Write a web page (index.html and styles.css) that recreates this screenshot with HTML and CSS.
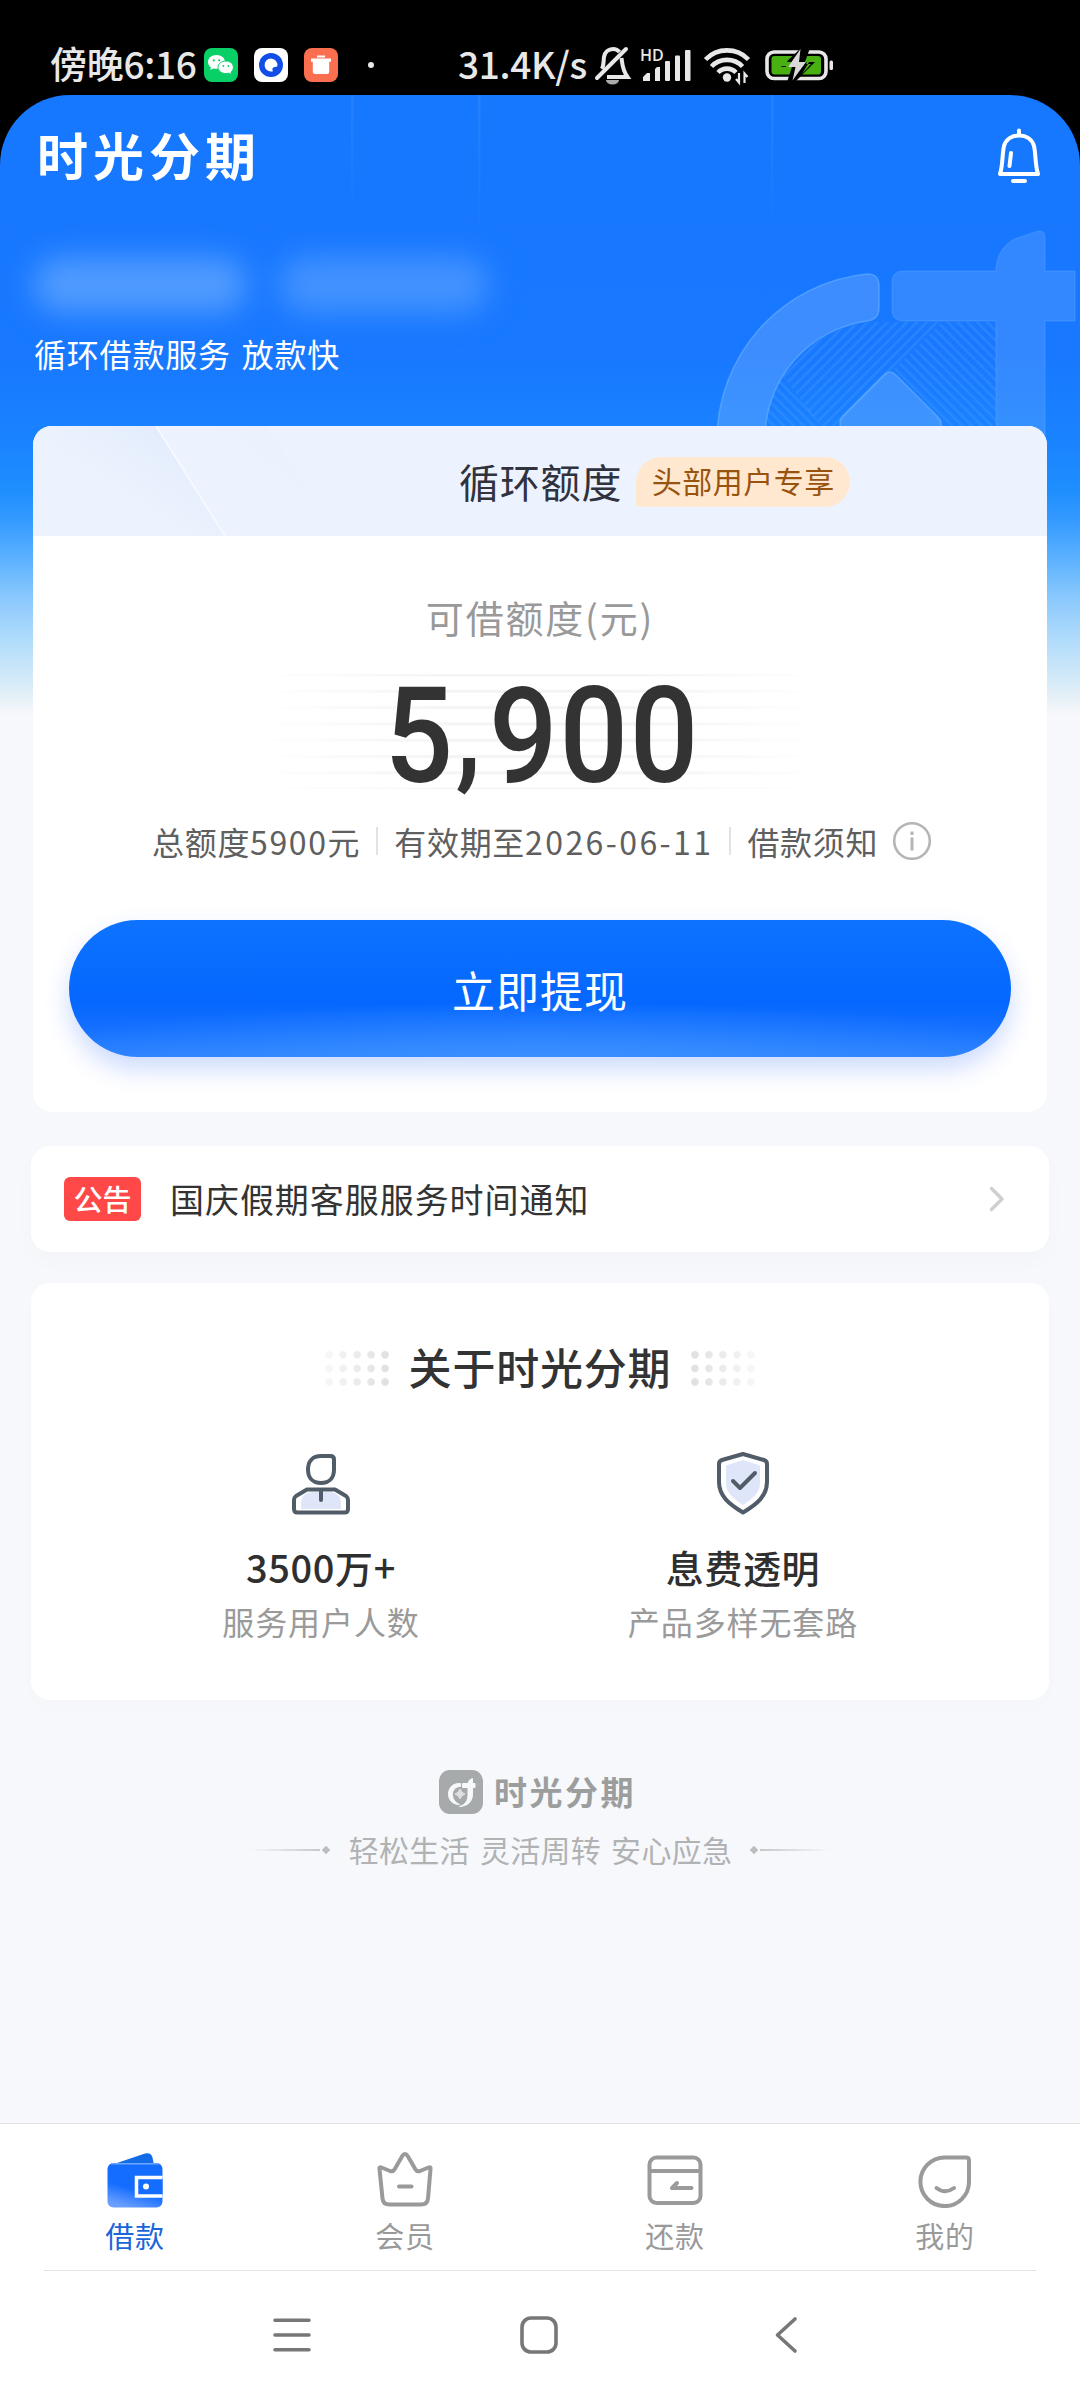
FILE: index.html
```html
<!DOCTYPE html>
<html lang="zh-CN">
<head>
<meta charset="utf-8">
<title>时光分期</title>
<link rel="stylesheet" href="styles.css">
</head>
<body>
<div class="phone">
  <header class="status">
    <span class="status-text">傍晚6:16</span>
    <svg class="app-badge first" width="34" height="34" viewBox="0 0 34 34">
      <rect width="34" height="34" rx="8" fill="#08cf66"/>
      <path d="M12.500 7C7.500 7 4 10 4 14c0 2.300 1.200 4.200 3 5.500L6.300 22l3.200-1.600c1 .3 2 .4 3 .4 5 0 8.500-3 8.500-6.900S17.500 7 12.500 7z" fill="#fff"/>
      <path d="M22 13c-4.600 0-8 2.700-8 6.300s3.400 6.300 8 6.300c1 0 1.900-.1 2.700-.4l2.900 1.500-.7-2.400c1.500-1.100 2.500-2.900 2.500-5C29.400 15.700 26.200 13 22 13z" fill="#fff" stroke="#08cf66" stroke-width="1"/>
      <g fill="#08cf66"><circle cx="9.800" cy="12.300" r="1.100"/><circle cx="15.200" cy="12.300" r="1.100"/><circle cx="19.400" cy="18" r=".9"/><circle cx="24.400" cy="18" r=".9"/></g>
    </svg>
    <svg class="app-badge" width="34" height="34" viewBox="0 0 34 34">
      <rect width="34" height="34" rx="8" fill="#fff"/>
      <circle cx="17" cy="17" r="12" fill="#124de8"/>
      <path d="M17 10.500a6.500 6.500 0 1 0 2 12.700c-1.200-2-.6-3.600 1-4 1.300-.3 2.500-.2 3.200-.6A6.500 6.500 0 0 0 17 10.500z" fill="#fff"/>
    </svg>
    <svg class="app-badge" width="34" height="34" viewBox="0 0 34 34">
      <rect width="34" height="34" rx="8" fill="#fa6f50"/>
      <path d="M13 7.500h8v2h-8zM7 10.500h20v3.200h-1.800V24a2 2 0 0 1-2 2H10.800a2 2 0 0 1-2-2V13.700H7z" fill="#fff"/>
    </svg>
    <i class="status-dot"></i>
    <span class="status-text speed">31.4K/s</span>
    <svg class="sys-icons" width="250" height="48" viewBox="590 40 250 48">
      <g fill="none" stroke="#e8e8e8" stroke-width="4">
        <path d="M597 77 626 48" stroke-linecap="round"/>
        <path d="M602 68c2-4 1.500-9 2-12 1-5 4.500-8 9-8 2.500 0 5 1 6.500 3"/>
        <path d="M621.500 57c1 6 .5 11 6 19H607"/>
      </g>
      <path d="M606 79h13a6.500 4.500 0 0 1-13 0z" fill="#aaa"/>
      <text x="640" y="60" class="hd">HD</text>
      <g fill="#e8e8e8">
        <path d="M643 80v-4l4-4h3v8z"/>
        <path d="M655 68l2-2h3v14h-5z"/>
        <rect x="665" y="60" width="5" height="20" rx="1"/>
        <rect x="675" y="54.500" width="5" height="25.500" rx="1"/>
        <rect x="685" y="49" width="5.500" height="31" rx="1"/>
        <circle cx="727" cy="76.500" r="4.200"/>
      </g>
      <g fill="none" stroke="#e8e8e8" stroke-width="4.600">
        <path d="M705.500 58.500a30 30 0 0 1 43 0"/>
        <path d="M711.500 65.500a21.500 21.500 0 0 1 31 0"/>
        <path d="M718 71.500a12.500 12.500 0 0 1 18 0"/>
        <path d="M739 72v9.500l-3-3.500M744.500 82v-9.500l3 3.500" stroke-width="2.200"/>
      </g>
      <rect x="767" y="51" width="59" height="26.500" rx="7" fill="none" stroke="#e8e8e8" stroke-width="3.600"/>
      <rect x="771.500" y="55" width="49.500" height="18.500" rx="3" fill="#48b010"/>
      <rect x="829.500" y="59.500" width="3.500" height="9.500" rx="1.500" fill="#e8e8e8"/>
      <path d="M801 47 781 66h11l-5 15h8l20-20h-10l5-14z" fill="#000"/>
      <path d="M786 56 780 65h6l-3 8 9-12h-5l2-5zM808 56l-3 5h4l-7 12 9-10h-5l3-7z" fill="#48b010"/>
      <path d="M800.500 48 788 66h7.500l-3 13.500L806 61h-7z" fill="#d9d9d9"/>
    </svg>
  </header>

  <main class="app">
    <svg class="backdrop" width="1080" height="400" viewBox="0 95 1080 400">
      <defs>
        <linearGradient id="beam" x1="0" y1="0" x2="0" y2="1"><stop offset="0" stop-color="#5aa3ff" stop-opacity=".22"/><stop offset="1" stop-color="#5aa3ff" stop-opacity="0"/></linearGradient>
        <pattern id="up" width="7" height="7" patternUnits="userSpaceOnUse" patternTransform="rotate(45)"><rect width="2.500" height="7" fill="#51a0ff" fill-opacity=".3"/></pattern>
        <pattern id="down" width="7" height="7" patternUnits="userSpaceOnUse" patternTransform="rotate(-45)"><rect width="2.500" height="7" fill="#51a0ff" fill-opacity=".3"/></pattern>
      </defs>
      <rect x="351" y="95" width="2.500" height="120" fill="url(#beam)"/>
      <rect x="478" y="95" width="2.500" height="150" fill="url(#beam)"/>
      <rect x="771" y="95" width="2.500" height="130" fill="url(#beam)"/>
      <path d="M783 376A118 118 0 0 1 874 322H942L828 436z" fill="url(#up)"/>
      <path d="M942 322H996V440H955L893 370 917 347z" fill="url(#down)"/>
      <path d="M765 440A118 118 0 0 1 783 376L830 436z" fill="url(#down)"/>
      <g fill="#fff" fill-opacity=".16" stroke="#7fc0ff" stroke-opacity=".42" stroke-width="1.600">
        <path d="M717 440A167 167 0 0 1 866 274q13-1 13 12v22q0 11-11 13A118 118 0 0 0 765 440z"/>
        <path d="M840 440v-18q0-3 3-6l41-41q6-6 12 0l42 42q3 3 3 6v17z"/>
      </g>
      <path d="M904 271H996c0-20 14-32 25-34l17-6q7-1 7 7v33h30v50h-30v150H996V321H904q-12 0-12-12v-26q0-12 12-12z" fill="#fff" fill-opacity=".12" stroke="#7fc0ff" stroke-opacity=".2" stroke-width="1.500"/>
    </svg>

    <section class="top">
      <h1 class="brand">时光分期</h1>
      <svg width="44" height="56" viewBox="0 0 44 56" fill="none" stroke="#fff" stroke-width="4" stroke-linecap="round" stroke-linejoin="round">
        <path d="M22 2.500v5M3 46c3-9 2-19 4-28C9 11 15 7.500 22 7.500S35 11 37 18c2 9 1 19 4 28z"/>
        <path d="M14 25l-1.500 13M16 53h12"/>
      </svg>
    </section>
    <div class="masked"><i></i><i></i></div>
    <p class="tagline">循环借款服务 放款快</p>

    <section class="card quota">
      <div class="quota-head">
        <svg class="rays" width="330" height="110" viewBox="0 0 330 110">
          <defs><linearGradient id="ray" x1="1" y1="0" x2=".2" y2=".7"><stop offset="0" stop-color="#d9e6fb"/><stop offset="1" stop-color="#edf3fe" stop-opacity="0"/></linearGradient></defs>
          <path d="M0 0H123L192 110H40z" fill="url(#ray)"/>
          <path d="M123 0H232L275 60 230 110H192z" fill="url(#ray)" opacity=".2"/>
          <path d="M123 0 192 110" stroke="#f8fbff" stroke-width="1.500"/>
        </svg>
        <h2>循环额度</h2><span class="badge">头部用户专享</span>
      </div>
      <p class="quota-label">可借额度(元)</p>
      <div class="amount"><span>5<b>,</b>900</span></div>
      <div class="facts">
        <span>总额度<em>5900</em>元</span><i></i><span>有效期至<em class="date">2026-06-11</em></span><i></i><span>借款须知</span>
        <svg width="40" height="40" viewBox="0 0 40 40" fill="none" stroke="#b5b5b5" stroke-width="2.600"><circle cx="20" cy="20" r="17.800"/><path d="M20 16.500v13M20 10.500v3.500" stroke-width="3"/></svg>
      </div>
      <button class="cta">立即提现</button>
    </section>

    <section class="card notice">
      <span class="tag">公告</span><span class="notice-text">国庆假期客服服务时间通知</span>
      <svg width="16" height="26" viewBox="0 0 16 26" fill="none" stroke="#cfcfcf" stroke-width="3.400" stroke-linecap="round" stroke-linejoin="round"><path d="M2.500 2.500 13 13 2.500 23.500"/></svg>
    </section>

    <section class="card about">
      <h2><i class="dots"></i><span>关于时光分期</span><i class="dots right"></i></h2>
      <div class="features">
        <div class="feature">
          <svg width="60" height="64" viewBox="0 0 60 64" fill="none" stroke="#505c68" stroke-width="4" stroke-linejoin="round" stroke-linecap="round">
            <path d="M10 52c0-8 6-11 13-11h14c7 0 13 3 13 11v6H10z" fill="#dfe6fa" stroke="none"/>
            <path d="M30 5H39.500q3.500 0 3.500 3.500v10C43 27 38 32 30 32S17 27 17 18.500 22 5 30 5z"/>
            <path d="M16 38.500H44l11 6.500q2 1.500 2 4V58q0 3.500-3.500 3.500h-47Q3 61.500 3 58v-9q0-2.500 2-4z"/>
            <path d="M30 40v9"/>
          </svg>
          <strong>3500万+</strong><span>服务用户人数</span>
        </div>
        <div class="feature">
          <svg width="60" height="64" viewBox="0 0 60 64" fill="none" stroke="#505c68" stroke-width="4" stroke-linejoin="round" stroke-linecap="round">
            <path d="M30 9 47 14.500V32c0 10-7 15-17 22-10-7-17-12-17-22V14.500z" fill="#dfe6fa" stroke="none"/>
            <path d="M30 3 51 9q3 1 3 4V31C54 45 44 53 30 61.500 16 53 6 45 6 31V13q0-3 3-4z"/>
            <path d="M20 30l7 7 15-15"/>
          </svg>
          <strong>息费透明</strong><span>产品多样无套路</span>
        </div>
      </div>
    </section>

    <footer class="signature">
      <div class="sig-brand">
        <svg width="44" height="44" viewBox="0 0 44 44">
          <rect width="44" height="44" rx="11" fill="#a7aaaa"/>
          <path d="M21.500 13.500C13.500 13 9.500 18 9.500 24c0 6 4 10.500 11 10.500-5-2.500-7-6-7-10 0-4.500 3-8 8-8z" fill="#f7f8fa" stroke="#f7f8fa" stroke-linejoin="round"/>
          <path d="M23.500 13.500H29q.5-4 4.500-5v5H36v4h-2.500V24c0 8-5 12-13 12.500 6-2 8.500-6 8.500-12v-7h-5.500z" fill="#f7f8fa" stroke="#f7f8fa" stroke-linejoin="round"/>
          <path d="M21 19q1.500 4 5 5-3.500 1-5 5-1.500-4-5-5 3.500-1 5-5z" fill="#dfe1e1" stroke="#dfe1e1"/>
        </svg>
        <b>时光分期</b>
      </div>
      <div class="slogan"><i class="rule"></i><i class="gem"></i><span>轻松生活 灵活周转 安心应急</span><i class="gem"></i><i class="rule right"></i></div>
    </footer>
  </main>

  <nav class="tabs">
    <a class="active">
      <svg width="56" height="58" viewBox="0 0 56 58">
        <defs><linearGradient id="wallet" x1=".65" y1=".2" x2=".35" y2="1"><stop offset=".5" stop-color="#146dff"/><stop offset="1" stop-color="#6b9fff"/></linearGradient></defs>
        <path d="M7 14 38 3.500q6-1.500 7.500 4L47 15z" fill="#146be8"/>
        <rect x=".5" y="13" width="55" height="44.500" rx="6" fill="url(#wallet)"/>
        <path d="M4 13.800H52" stroke="#6fa6ff" stroke-width="1.500"/>
        <path d="M55.500 27.500H29.500v18.500h26" fill="#146dff" stroke="#fff" stroke-width="3.500"/>
        <circle cx="39" cy="36.500" r="3" fill="#fff"/>
      </svg><span>借款</span></a>
    <a>
      <svg width="56" height="58" viewBox="0 0 56 58" fill="none" stroke="#9a9a9a" stroke-width="4" stroke-linecap="round" stroke-linejoin="round">
        <path d="M2.500 19q-.5-2.500 2-1.500l8.500 3.500q3 1 4.500-1.500L25 6.500q3-5 6 0l7.500 13q1.500 2.500 4.500 1.500l8.500-3.500q2.500-1 2 1.500L51 48.500q-.5 6-7 6H12.500q-6.500 0-7-6z"/>
        <path d="M22 36.500h12.500"/>
      </svg><span>会员</span></a>
    <a>
      <svg width="56" height="58" viewBox="0 0 56 58" fill="none" stroke="#9a9a9a" stroke-width="4" stroke-linecap="round" stroke-linejoin="round">
        <rect x="2.500" y="7.500" width="51" height="45.500" rx="7"/><path d="M3 21h50M30 33l-5 5h19.500"/>
      </svg><span>还款</span></a>
    <a>
      <svg width="56" height="58" viewBox="0 0 56 58" fill="none" stroke="#9a9a9a" stroke-width="4" stroke-linecap="round" stroke-linejoin="round">
        <path d="M27.500 7.500H49q3 0 3 3V32A24.300 24.300 0 1 1 27.500 7.500z"/><path d="M19.500 38q8.500 6.500 17.500 0"/>
      </svg><span>我的</span></a>
  </nav>
  <div class="sysnav">
    <svg width="38" height="38" viewBox="0 0 38 38" fill="none" stroke="#777" stroke-width="3.600" stroke-linecap="round"><path d="M2 4.200h34M2 19h34M2 33.800h34"/></svg>
    <svg width="38" height="38" viewBox="0 0 38 38" fill="none" stroke="#777" stroke-width="3.600"><rect x="2" y="2" width="34" height="34" rx="9"/></svg>
    <svg width="38" height="38" viewBox="0 0 38 38" fill="none" stroke="#777" stroke-width="3.600" stroke-linecap="round" stroke-linejoin="round"><path d="M28 3 10.500 19 28 35"/></svg>
  </div>
</div>
</body>
</html>
```
FILE: styles.css
```css
* { box-sizing: border-box; margin: 0; padding: 0; }
body {
  width: 1080px;
  background: #000;
  font-family: "Noto Sans CJK SC", "Noto Sans", sans-serif;
  line-height: 1;
  white-space: nowrap;
}
i, em { font-style: normal; }
svg { display: block; flex: none; }

.phone { display: flex; flex-direction: column; height: 2400px; overflow: hidden; }

/* status bar */
.status { height: 95px; flex: none; display: flex; align-items: center; padding: 34px 0 0 50px; }
.status-text { width: 146px; color: #e8e8e8; font-size: 37px; font-weight: 500; line-height: 40px; letter-spacing: -.3px; margin-top: -4px; }
.app-badge { margin-left: 16px; }
.app-badge.first { margin-left: 8px; }
.status-dot { width: 6px; height: 6px; border-radius: 50%; background: #e8e8e8; margin-left: 30px; }
.speed { margin-left: 84px; width: 132px; }
.sys-icons { margin-left: 0; }
.hd { font: 600 16px "Open Sans", sans-serif; fill: #e8e8e8; }

/* page */
.app {
  position: relative;
  flex: none;
  height: 2028px;
  border-radius: 70px 70px 0 0;
  background: linear-gradient(#1677ff 0, #1878ff 260px, #1a83ff 345px, #1e8eff 395px, #369bff 427px, #5ab0ff 462px, #8ccafd 505px, #b0dcfb 545px, #d4eaf8 585px, #e8f1f8 605px, #f7f8fb 620px);
}
.backdrop { position: absolute; left: 0; top: 0; border-radius: 70px 70px 0 0; }
.top { position: relative; height: 126px; padding: 30px 39px 0 37px; display: flex; justify-content: space-between; align-items: center; }
.brand { font-size: 51px; font-weight: 700; letter-spacing: 5px; color: #fff; line-height: 56px; transform: translateY(-19px); }
.top svg { transform: translateY(-17px); }
.masked { display: flex; gap: 34px; height: 95px; padding: 36px 0 0 34px; filter: blur(15px); }
.masked i { width: 212px; height: 56px; border-radius: 24px; background: #67a9ff; opacity: .72; }
.masked i + i { width: 208px; opacity: .55; }
.tagline { position: relative; padding: 17px 0 0 34px; height: 110px; font-size: 32px; line-height: 40px; letter-spacing: .8px; word-spacing: 3px; color: #fff; }

.card { position: relative; background: #fff; border-radius: 19px; }
.quota { width: 1014px; height: 686px; margin: 0 auto; overflow: hidden; }
.quota-head { position: relative; height: 110px; padding-left: 426px; display: flex; align-items: center; background: #edf3fe; }
.quota-head h2 { position: relative; font-size: 40px; font-weight: 400; letter-spacing: .8px; color: #30323e; }
.rays { position: absolute; left: 0; top: 0; }
.badge { width: 214px; height: 50px; margin: 2px 0 0 14px; border-radius: 25px 25px 25px 4px; background: #ffe8cf; color: #98540f; font-size: 30px; line-height: 47px; text-align: center; letter-spacing: .5px; }
.quota-label { margin-top: 60px; text-align: center; font-size: 38px; line-height: 42px; letter-spacing: 1.800px; color: #999; }
.amount {
  width: 560px; height: 115px; margin: 36px auto 0; display: flex; justify-content: center;
  background: linear-gradient(90deg, #fff, transparent 35%, transparent 65%, #fff), repeating-linear-gradient(#f4f4f4 0 2px, #fff 3px 15.300px, #f4f4f4 16.300px);
}
.amount span { font: 500 134px/115px Roboto, sans-serif; letter-spacing: 2px; color: #333; transform: translate(2px, 5px) scaleX(.9); }
.amount b { display: inline-block; font-weight: 500; margin-right: 6px; transform: translateY(-9px) scale(.95, 1); }
.facts { height: 40px; margin-top: 32px; padding-left: 119px; display: flex; align-items: center; font-size: 32px; letter-spacing: .7px; color: #5f5f5f; }
.facts i { width: 2px; height: 28px; margin: 0 16px; background: #e2e2e2; }
.facts em { letter-spacing: 1.600px; }
.facts .date { letter-spacing: 2.400px; }
.facts svg { margin-left: 14px; }
.cta {
  display: block; width: 942px; height: 137px; margin: 59px auto 0; border: 0; border-radius: 69px;
  font: 400 43px/134px "Noto Sans CJK SC", sans-serif; letter-spacing: 1px; color: #fff;
  background: radial-gradient(ellipse 60% 45% at 50% 105%, #3b91ff, transparent), linear-gradient(#0d73ff, #0567ff 60%, #1470ff 80%, #2b80ff);
  box-shadow: 0 12px 24px rgba(40, 100, 245, .24);
}

.notice { width: 1018px; height: 106px; margin: 34px auto 0; padding: 0 44px 0 33px; display: flex; align-items: center; box-shadow: 0 8px 24px rgba(30, 40, 60, .02); }
.tag { width: 77px; height: 44px; border-radius: 6px; background: #ff4848; color: #fff; font-size: 29px; font-weight: 500; line-height: 43px; text-align: center; }
.notice-text { margin-left: 29px; margin-right: auto; font-size: 34px; letter-spacing: .95px; color: #333; }

.about { width: 1018px; height: 417px; margin: 31px auto 0; padding-top: 60px; box-shadow: 0 8px 24px rgba(30, 40, 60, .012); }
.about h2 { display: flex; justify-content: center; align-items: center; height: 50px; font-size: 43px; font-weight: 500; letter-spacing: .8px; color: #333; }
.about h2 span { margin: -3px 0 0 1px; }
.dots { width: 70px; height: 41px; margin-right: 16px; background: radial-gradient(circle, #dedede 3.300px, transparent 4.300px) 0 0 / 14px 13.600px; -webkit-mask-image: linear-gradient(90deg, rgba(0,0,0,.2), #000); }
.dots.right { margin: 0 0 0 17px; transform: scaleX(-1); }
.features { display: flex; justify-content: center; padding: 58px 16px 0 0; }
.feature { width: 422px; display: flex; flex-direction: column; align-items: center; }
.feature strong { margin-top: 30px; font-size: 38px; font-weight: 500; line-height: 44px; letter-spacing: .6px; color: #2f2f2f; }
.feature span { margin-top: 12px; font-size: 32px; line-height: 40px; letter-spacing: .9px; color: #9a9a9a; }

.signature { padding-top: 70px; }
.sig-brand { display: flex; align-items: center; height: 44px; padding-left: 439px; }
.sig-brand b { margin: -2px 0 0 11px; font-size: 33px; font-weight: 700; letter-spacing: 2.500px; color: #9c9e9e; }
.slogan { display: flex; justify-content: center; align-items: center; height: 40px; margin-top: 16px; }
.slogan span { margin: -2px 16px 0 17px; font-size: 30px; letter-spacing: .3px; word-spacing: 3px; color: #b0b2b3; }
.rule { width: 70px; height: 2px; background: linear-gradient(90deg, transparent, #c6c8ca); }
.rule.right { transform: scaleX(-1); }
.gem { width: 6px; height: 6px; margin: 0 3px; background: #bbbdbf; transform: rotate(45deg); }

/* bottom bars */
.tabs { position: relative; flex: none; height: 148px; display: grid; grid-template-columns: repeat(4, 270px); background: #fff; border-top: 1px solid #dfe1e4; }
.tabs::after { content: ""; position: absolute; left: 44px; right: 44px; bottom: 0; height: 1px; background: #e2e3e5; }
.tabs a { display: flex; flex-direction: column; align-items: center; padding-top: 26px; color: #999; font-size: 29px; letter-spacing: .8px; }
.tabs span { margin-top: 9px; line-height: 36px; }
.tabs .active { color: #1a66d8; }
.sysnav { flex: 1; background: #fff; display: flex; justify-content: center; gap: 209px; padding: 45px 2px 0 0; }
```
